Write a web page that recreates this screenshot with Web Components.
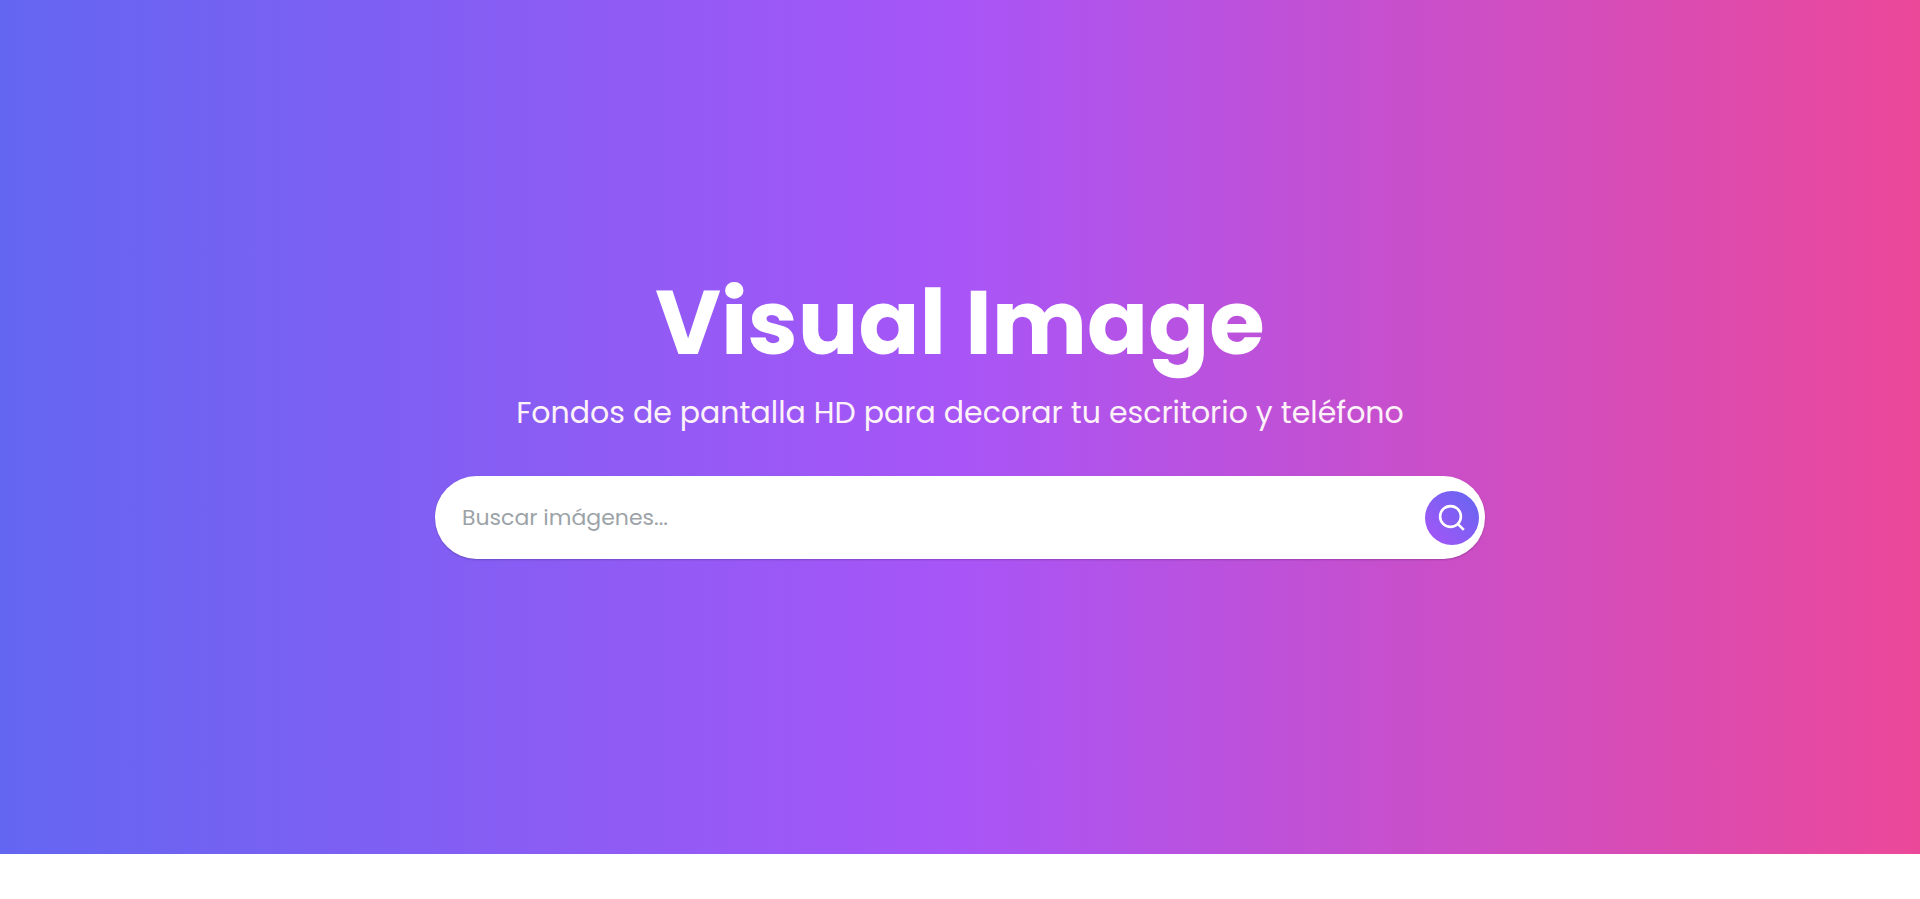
<!DOCTYPE html>
<html lang="es">
<head>
<meta charset="utf-8">
<meta name="viewport" content="width=device-width, initial-scale=1">
<title>Visual Image</title>
<style>
body { margin: 0; background: #fff; font-family: Poppins, Inter, "Open Sans", sans-serif; }
</style>
</head>
<body>
<hero-banner>
  <span slot="title">Visual Image</span>
  <span slot="subtitle">Fondos de pantalla HD para decorar tu escritorio y teléfono</span>
  <search-box placeholder="Buscar imágenes..."></search-box>
</hero-banner>

<template id="hero-template">
  <style>
    :host { display: block; }
    header {
      box-sizing: border-box;
      min-height: 95vh;
      padding: 0 18px 18px;
      display: flex;
      flex-direction: column;
      align-items: center;
      justify-content: center;
      text-align: center;
      color: #fff;
      background: linear-gradient(to right, #6366f1, #a855f7, #ec4899);
    }
    h1 { margin: 0 0 24px; font-size: 90px; line-height: 90px; font-weight: 700; }
    p { margin: 0 0 42px; font-size: 30px; line-height: 42px; color: #fdf2f8; }
    .search { width: 100%; max-width: 1050px; }
  </style>
  <header>
    <h1><slot name="title"></slot></h1>
    <p><slot name="subtitle"></slot></p>
    <div class="search"><slot></slot></div>
  </header>
</template>

<template id="search-template">
  <style>
    :host { display: block; }
    form {
      box-sizing: border-box;
      display: flex;
      align-items: center;
      gap: 18px;
      padding: 15px 6px 14px 27px;
      border-radius: 42px;
      background: #fff;
      box-shadow: 0 1px 2px rgba(0, 0, 0, .2);
    }
    input {
      flex: 1;
      min-width: 0;
      padding: 0;
      border: 0;
      outline: 0;
      background: none;
      color: #374151;
      font: inherit;
      font-size: 22px;
      line-height: 36px;
    }
    input::placeholder { color: #9ca3a8; opacity: 1; }
    button {
      flex: none;
      display: grid;
      place-items: center;
      width: 54px;
      height: 54px;
      padding: 0;
      border: 0;
      border-radius: 50%;
      color: #fff;
      cursor: pointer;
      background: linear-gradient(to top right, #a855f7, #6366f1);
    }
    svg { display: block; width: 28px; height: 28px; }
  </style>
  <form role="search">
    <input type="search" aria-label="Buscar imágenes">
    <button type="submit" aria-label="Buscar">
      <svg viewBox="0 0 28 28" fill="none" stroke="currentColor" stroke-width="2.6" aria-hidden="true">
        <circle cx="12.5" cy="12.5" r="10.4"/>
        <path d="M19.8 19.8l6 6"/>
      </svg>
    </button>
  </form>
</template>

<script>
class HeroBanner extends HTMLElement {
  constructor() {
    super();
    this.attachShadow({ mode: "open" })
      .append(document.getElementById("hero-template").content.cloneNode(true));
  }
}
class SearchBox extends HTMLElement {
  constructor() {
    super();
    this.attachShadow({ mode: "open" })
      .append(document.getElementById("search-template").content.cloneNode(true));
    this.shadowRoot.querySelector("form")
      .addEventListener("submit", (event) => event.preventDefault());
  }
  connectedCallback() {
    this.shadowRoot.querySelector("input").placeholder = this.getAttribute("placeholder") || "";
  }
}
customElements.define("hero-banner", HeroBanner);
customElements.define("search-box", SearchBox);
</script>
</body>
</html>
